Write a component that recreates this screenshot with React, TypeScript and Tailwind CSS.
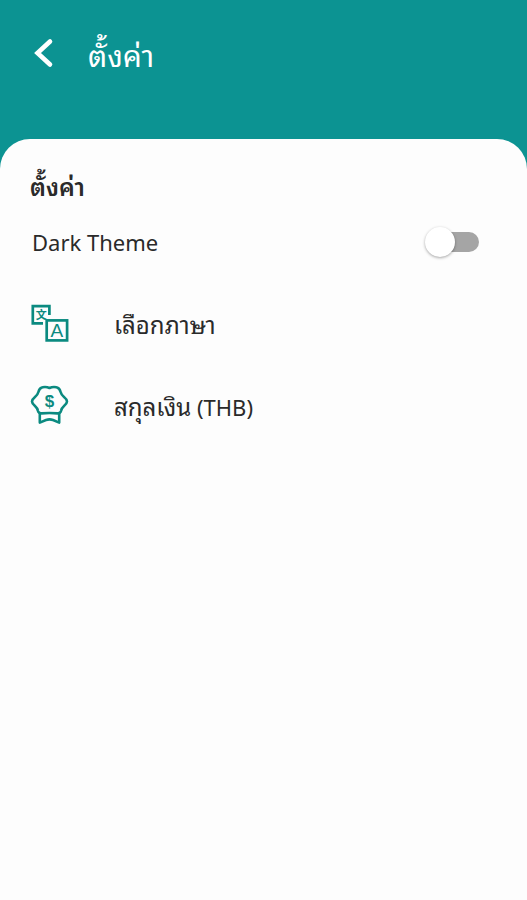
import React, {useState} from 'react'

const BackIcon = () => (
    <svg className="h-8 w-8" viewBox="0 0 32 32" fill="none" stroke="currentColor" strokeWidth="4.6"
         strokeLinecap="round" strokeLinejoin="miter" aria-hidden="true">
        <path d="M22 5.5 9.5 17 22 28.5"/>
    </svg>
)

const LanguageIcon = () => (
    <svg className="h-10 w-10" viewBox="0 0 40 40" fill="none" stroke="currentColor" strokeWidth="2.7"
         aria-hidden="true">
        <path d="M13 20.3H2.8V3.2h16.6V12"/>
        <rect x="16.7" y="17.4" width="20.4" height="20"/>
        <text x="11.3" y="15.8" fontSize="11" fontWeight="700" textAnchor="middle" fill="currentColor" stroke="none"
              fontFamily="'Noto Sans CJK SC', sans-serif">文</text>
        <text x="26.9" y="34" fontSize="19" textAnchor="middle" fill="currentColor" stroke="none"
              fontFamily="'Liberation Sans', sans-serif">A</text>
    </svg>
)

const CurrencyIcon = () => (
    <svg className="h-10 w-10" viewBox="0 0 40 40" fill="none" stroke="currentColor" strokeWidth="2.6"
         strokeLinejoin="round" aria-hidden="true">
        <path d="M19.5 3Q23 1.4 26.5 2.3Q29.6 3 30.6 7Q31.4 10 34 12Q37 14.4 37 16.5Q37 18.6 34 21Q31.6 23 31 26Q30.4 28.4 27.5 28.4Q19.5 27.6 11.5 28.4Q8.6 28.4 8 26Q7.4 23 5 21Q2 18.6 2 16.5Q2 14.4 5 12Q7.6 10 8.4 7Q9.4 3 12.5 2.3Q16 1.4 19.5 3Z"/>
        <path d="M9.8 28V37.6L16 35Q19.5 33.8 23 35L29.2 37.6V28"/>
        <text x="19.5" y="21.5" fontSize="17" fontWeight="700" textAnchor="middle" fill="currentColor" stroke="none"
              fontFamily="'Liberation Sans', sans-serif">$</text>
    </svg>
)

const items = [
    {key: 'language', label: 'เลือกภาษา', code: '', icon: <LanguageIcon/>},
    {key: 'currency', label: 'สกุลเงิน', code: '(THB)', icon: <CurrencyIcon/>},
]

const App = () => {
    const [dark, setDark] = useState(false)

    return (
        <div className="flex min-h-screen flex-col bg-[#0c9392] font-['Noto_Sans','Noto_Sans_Thai_Looped','Noto_Looped_Thai','Loma','Garuda','Waree','Umpush',sans-serif]">
            <header className="flex h-[139px] items-start gap-7 px-7 pt-9 text-white">
                <button type="button" aria-label="ย้อนกลับ">
                    <BackIcon/>
                </button>
                <h1 className="text-[30px] leading-10">ตั้งค่า</h1>
            </header>

            <main className="flex-1 rounded-t-[30px] bg-[#fdfdfd] px-7 pt-8 text-[#2a2a2a]">
                <h2 className="px-0.5 text-2xl leading-8 font-semibold">ตั้งค่า</h2>

                <div className="mt-[23px] flex items-center justify-between pr-5 pl-1">
                    <label htmlFor="dark-theme" className="text-[22px] leading-8">Dark Theme</label>
                    <span className="relative flex h-8 w-[54px] items-center">
                        <input
                            id="dark-theme" type="checkbox" role="switch" checked={dark}
                            onChange={event => setDark(event.target.checked)}
                            className="peer ml-2 h-5 w-full cursor-pointer appearance-none rounded-full bg-[#a5a5a5] checked:bg-[#7cc5c4]"
                        />
                        <span
                            className="pointer-events-none absolute left-0 h-[30px] w-[30px] rounded-full bg-white shadow-[0_1px_3px_rgba(0,0,0,0.35)] peer-checked:left-6 peer-checked:bg-[#0c9392]"/>
                    </span>
                </div>

                <ul className="mt-6">
                    {items.map(item => (
                        <li key={item.key}>
                            <button type="button" className="flex h-[82px] w-full items-center gap-11 pl-0.5 text-left">
                                <span className="text-[#0b8a80]">{item.icon}</span>
                                <span className="pt-1 text-2xl leading-8">
                                    {item.label}
                                    {item.code && <span className="text-[22px]"> {item.code}</span>}
                                </span>
                            </button>
                        </li>
                    ))}
                </ul>
            </main>
        </div>
    )
}
export default App
